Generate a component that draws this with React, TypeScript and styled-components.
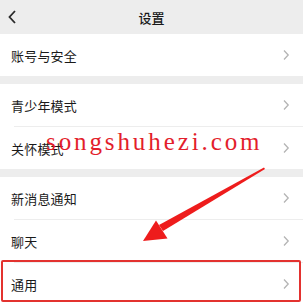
import styled, { createGlobalStyle } from "styled-components";

const GlobalStyle = createGlobalStyle`
  html, body {
    margin: 0;
    padding: 0;
    background: #ededed;
  }
  body {
    font-family: "Noto Sans CJK SC", "Noto Sans", sans-serif;
  }
`;

const Page = styled.div`
  position: relative;
  width: 303px;
  height: 305px;
  overflow: hidden;
  background: #ededed;
  display: flex;
  flex-direction: column;
`;

const Header = styled.header`
  height: 34px;
  display: grid;
  grid-template-columns: 40px 1fr 40px;
  align-items: center;
  flex-shrink: 0;
`;

const BackButton = styled.div`
  display: flex;
  align-items: center;
  padding-left: 7px;
  height: 100%;
`;

const Title = styled.h1`
  margin: 0;
  text-align: center;
  font-size: 13px;
  font-weight: 500;
  color: #191919;
  line-height: 1;
  padding-top: 1px;
`;

const Section = styled.section<{ $gap?: boolean }>`
  background: #fff;
  margin-top: ${(p) => (p.$gap ? "8px" : "0")};
  display: flex;
  flex-direction: column;
  flex-shrink: 0;
`;

const Row = styled.div<{ $divider?: boolean }>`
  height: 42px;
  display: flex;
  align-items: center;
  justify-content: space-between;
  padding: 0 13px 0 11px;
  position: relative;
  border-top: ${(p) => (p.$divider ? "1px solid #ededed" : "none")};
  margin-left: ${(p) => (p.$divider ? "14px" : "0")};
  padding-left: ${(p) => (p.$divider ? "0" : "11px")};
  & > span {
    margin-left: ${(p) => (p.$divider ? "-3px" : "0")};
  }
`;

const Label = styled.span`
  font-size: 13px;
  color: #1a1a1a;
  letter-spacing: 0.2px;
`;

const Watermark = styled.div`
  position: absolute;
  left: 46px;
  top: 129px;
  font-family: "Liberation Serif", serif;
  font-size: 25px;
  letter-spacing: 2.9px;
  color: #e31e2c;
  line-height: 1;
  pointer-events: none;
`;

const Arrow = styled.svg`
  position: absolute;
  left: 0;
  top: 0;
  pointer-events: none;
`;

const Highlight = styled.div`
  position: absolute;
  left: 1px;
  top: 260px;
  width: 296px;
  height: 38px;
  border: 2px solid #e3322f;
  border-radius: 2px;
  pointer-events: none;
`;

function Chevron() {
  return (
    <svg width="8" height="12" viewBox="0 0 8 12">
      <path d="M2 1.5 L6.2 6 L2 10.5" fill="none" stroke="#b4b4b4" strokeWidth="1.3" />
    </svg>
  );
}

function BackIcon() {
  return (
    <svg width="10" height="16" viewBox="0 0 10 16">
      <path d="M8 2 L2.5 8 L8 14" fill="none" stroke="#2a2a2a" strokeWidth="1.8" />
    </svg>
  );
}

const sections: { items: string[] }[] = [
  { items: ["账号与安全"] },
  { items: ["青少年模式", "关怀模式"] },
  { items: ["新消息通知", "聊天", "通用"] },
];

export default function App() {
  return (
    <>
      <GlobalStyle />
      <Page>
        <Header>
          <BackButton>
            <BackIcon />
          </BackButton>
          <Title>设置</Title>
          <div />
        </Header>
        {sections.map((s, si) => (
          <Section key={si} $gap={si > 0}>
            {s.items.map((label, i) => (
              <Row key={label} $divider={i > 0}>
                <Label>{label}</Label>
                <Chevron />
              </Row>
            ))}
          </Section>
        ))}
        <Watermark>songshuhezi.com</Watermark>
        <Arrow width="303" height="305" viewBox="0 0 303 305">
          <polygon points="264,167.5 265,169 163,231 159,225" fill="#ee1c1c" />
          <polygon points="143,241 156,220.5 167.5,238.5" fill="#ee1c1c" />
        </Arrow>
        <Highlight />
      </Page>
    </>
  );
}
